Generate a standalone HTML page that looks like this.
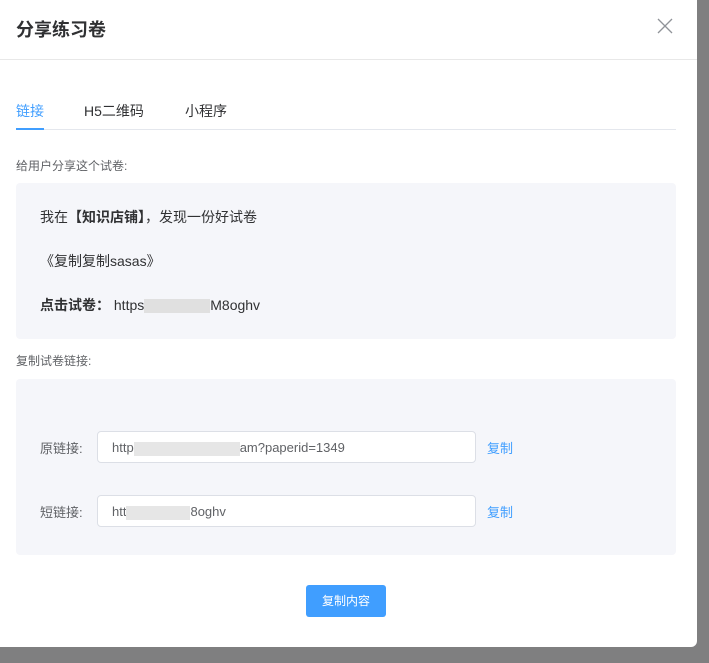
<!DOCTYPE html>
<html><head><meta charset="utf-8"><style>
*{margin:0;padding:0;box-sizing:border-box}
body{width:709px;height:663px;background:#7f7f80;font-family:"Liberation Sans","Noto Sans CJK SC",sans-serif;position:relative;overflow:hidden}
.dlg{position:absolute;left:0;top:0;width:697px;height:647px;background:#fff;border-radius:0 0 6px 0}
.abs{position:absolute;white-space:nowrap}
.title{left:16px;top:16px;font-size:18px;font-weight:bold;color:#303133}
.hr{left:0;top:59px;width:697px;height:1px;background:#e8e8e8}
.tab{top:101px;font-size:14px;color:#303133}
.box{left:16px;width:660px;background:#f5f6fa;border-radius:4px}
.lbl{font-size:12px;color:#606266}
.inp{left:97px;width:379px;height:32px;border:1px solid #dcdfe6;border-radius:4px;background:#fff;font-size:13px;color:#606266;padding:8px 14px;line-height:15px}
.cp{left:487px;font-size:13px;color:#409eff}
</style></head><body>
<div class="dlg">
<div class="abs title">分享练习卷</div>
<svg class="abs" style="left:657px;top:18px" width="16" height="16"><path d="M1 1L15 15M15 1L1 15" stroke="#909399" stroke-width="1.3"/></svg>
<div class="abs hr"></div>
<div class="abs tab" style="left:16px;color:#409eff">链接</div>
<div class="abs tab" style="left:84px">H5二维码</div>
<div class="abs tab" style="left:185px">小程序</div>
<div class="abs" style="left:16px;top:129px;width:660px;height:1px;background:#e4e7ed"></div>
<div class="abs" style="left:16px;top:128px;width:28px;height:2px;background:#409eff"></div>
<div class="abs lbl" style="left:16px;top:157px">给用户分享这个试卷:</div>
<div class="abs box" style="top:183px;height:156px"></div>
<div class="abs" style="left:40px;top:207px;font-size:14px;color:#303133">我在<b>【知识店铺】</b>，发现一份好试卷</div>
<div class="abs" style="left:40px;top:251px;font-size:14px;color:#303133">《复制复制sasas》</div>
<div class="abs" style="left:40px;top:295px;font-size:14px;color:#303133"><b>点击试卷：</b> https<span style="display:inline-block;width:66px;height:14px;background:#e0e0e0;vertical-align:middle"></span>M8oghv</div>
<div class="abs lbl" style="left:16px;top:352px">复制试卷链接:</div>
<div class="abs box" style="top:379px;height:176px"></div>
<div class="abs lbl" style="left:40px;top:438px;font-size:13px">原链接:</div>
<div class="abs inp" style="top:431px">http<span style="display:inline-block;width:106px;height:14px;background:#e6e6e6;vertical-align:middle"></span>am?paperid=1349</div>
<div class="abs cp" style="top:438px">复制</div>
<div class="abs lbl" style="left:40px;top:502px;font-size:13px">短链接:</div>
<div class="abs inp" style="top:495px">htt<span style="display:inline-block;width:64px;height:14px;background:#e6e6e6;vertical-align:middle"></span>8oghv</div>
<div class="abs cp" style="top:502px">复制</div>
<div class="abs" style="left:306px;top:585px;width:80px;height:32px;background:#409eff;border-radius:3px;color:#fff;font-size:12px;text-align:center;line-height:32px">复制内容</div>
</div>
</body></html>
